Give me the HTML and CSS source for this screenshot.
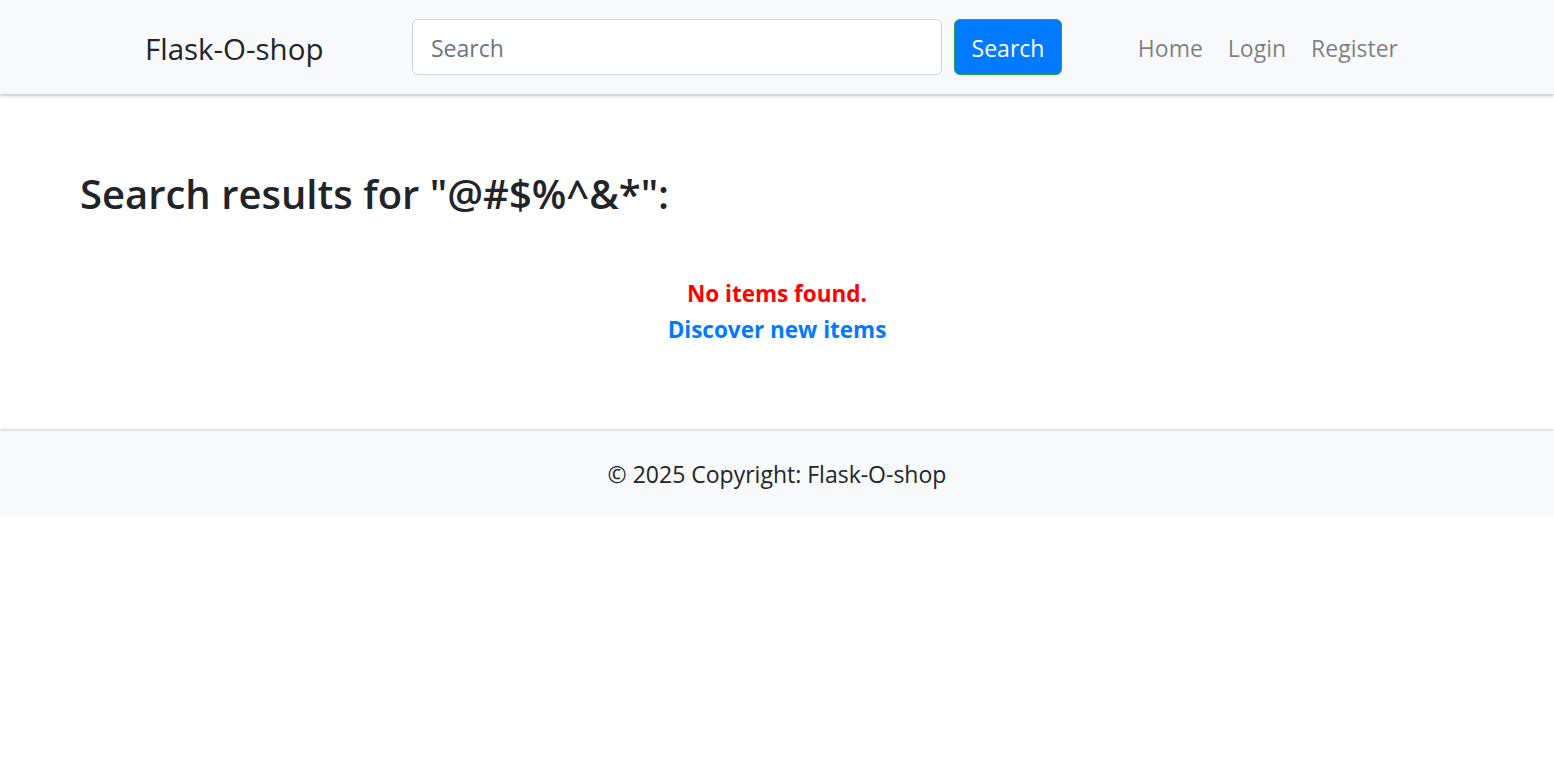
FILE: index.html
```html
<!DOCTYPE html>
<html lang="en">
<head>
<meta charset="utf-8">
<title>Flask-O-shop</title>
<link rel="stylesheet" href="styles.css">
</head>
<body>
<nav class="navbar">
  <div class="navbar-inner">
    <a class="brand" href="#">Flask-O-shop</a>
    <form class="search-form">
      <input class="search-input" type="text" placeholder="Search">
      <button class="search-btn" type="button">Search</button>
    </form>
    <ul class="nav-links">
      <li><a href="#">Home</a></li>
      <li><a href="#">Login</a></li>
      <li><a href="#">Register</a></li>
    </ul>
  </div>
</nav>
<main class="container">
  <h2 class="results-title">Search results for "@#$%^&amp;*":</h2>
  <div class="empty">
    <p class="not-found">No items found.</p>
    <a class="discover" href="#">Discover new items</a>
  </div>
</main>
<footer class="footer">
  <p>© 2025 Copyright: Flask-O-shop</p>
</footer>
</body>
</html>
```
FILE: styles.css
```css
* { box-sizing: border-box; }
html, body { margin: 0; padding: 0; }
body {
  font-family: "Open Sans", "Noto Sans", sans-serif;
  font-size: 23px;
  color: #212529;
  background: #fff;
}
a { text-decoration: none; }

.navbar {
  background: #f8f9fa;
  height: 94px;
  box-shadow: 0 2px 3px rgba(0,0,0,0.22);
  position: relative;
  z-index: 1;
}
.navbar-inner {
  height: 100%;
  display: flex;
  align-items: center;
  padding: 2px 144px 0 145px;
}
.brand {
  color: #212529;
  font-size: 29.5px;
  width: 267px;
}
.search-form {
  display: flex;
  align-items: center;
  gap: 12px;
  margin-top: -2px;
}
.search-input {
  width: 530px;
  height: 56px;
  border: 1.5px solid #ced4da;
  border-radius: 6px;
  padding: 1px 18px 0;
  font-family: inherit;
  font-size: 23px;
  color: #495057;
  background: #fff;
}
.search-input::placeholder { color: #6c757d; }
.search-btn {
  width: 108px;
  height: 56px;
  background: #007bff;
  border: 1.5px solid #28a745;
  border-radius: 6px;
  color: #fff;
  font-family: inherit;
  font-size: 23px;
  padding: 1px 0 0;
}
.nav-links {
  list-style: none;
  margin: 0 0 0 auto;
  padding: 0;
  display: flex;
}
.nav-links a {
  display: block;
  padding: 0 12.5px;
  color: rgba(0,0,0,0.5);
}
.nav-links li:last-child a { padding-right: 12px; }

.container {
  padding: 76px 80px 83px;
}
.results-title {
  margin: 0;
  font-size: 40px;
  font-weight: 600;
  line-height: 1.2;
}
.empty {
  text-align: center;
  margin-top: 58px;
  font-size: 22.5px;
  font-weight: 700;
  line-height: 36px;
}
.not-found {
  margin: 0;
  color: #ff0000;
}
.discover {
  color: #007bff;
}

.footer {
  background: #f8f9fa;
  height: 85px;
  display: flex;
  align-items: center;
  justify-content: center;
  box-shadow: 0 -1px 3px rgba(0,0,0,0.2), 0 1px 3px rgba(0,0,0,0.2);
}
.footer p { margin: 0; }
```
